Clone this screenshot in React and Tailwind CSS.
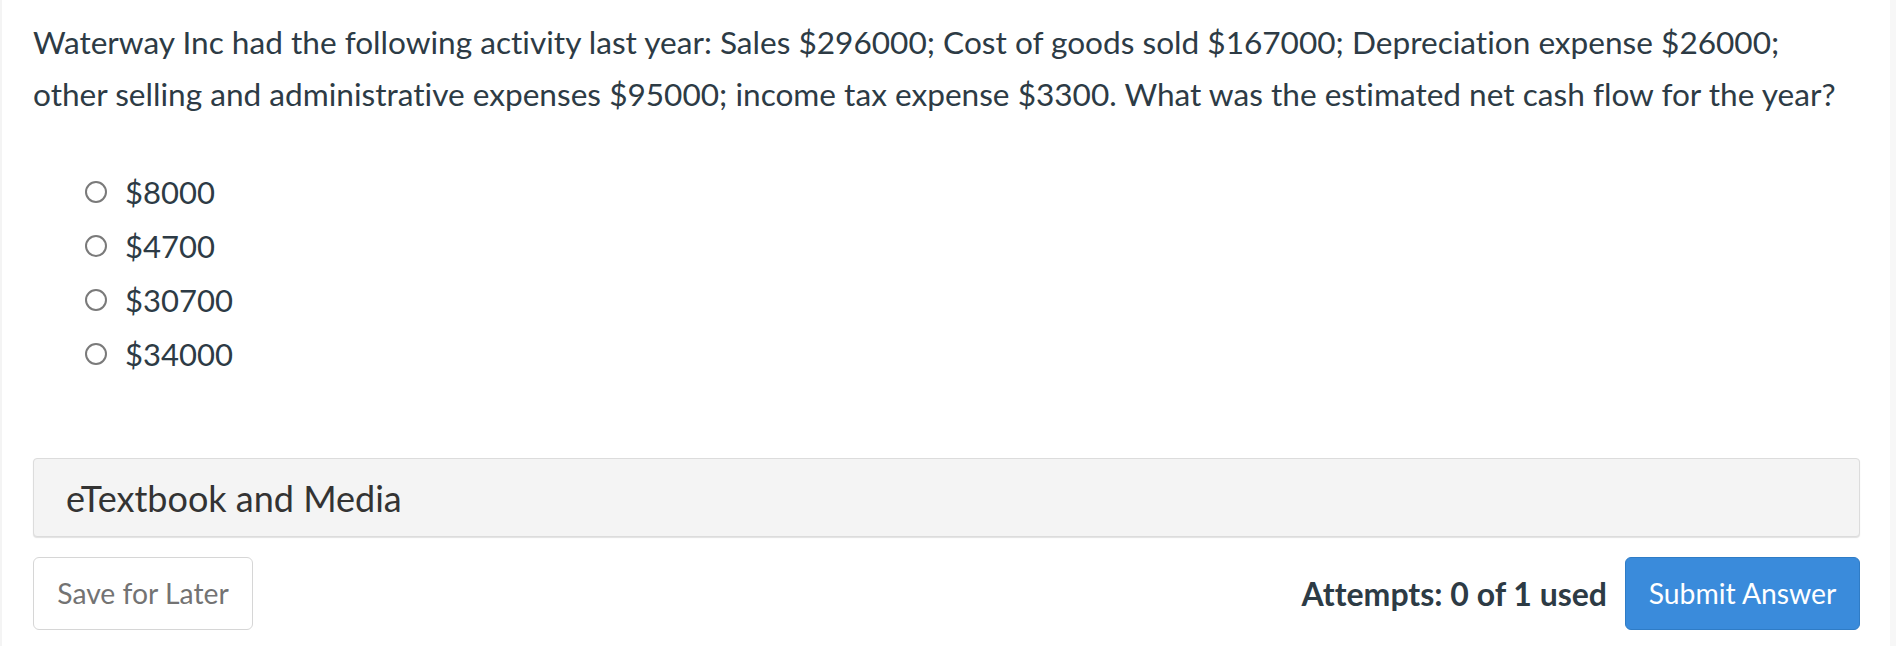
import React from "react";

const options = ["$8000", "$4700", "$30700", "$34000"];

function Radio() {
  return (
    <span className="inline-block h-[22px] w-[22px] shrink-0 rounded-full border-2 border-[#7a7a7a] bg-white" />
  );
}

export default function App() {
  return (
    <div
      className="flex h-[646px] w-[1896px] bg-white text-[#2d3b45] [font-variant-ligatures:none]"
      style={{ fontFamily: "Lato, 'Open Sans', Arial, sans-serif" }}
    >
      <div className="w-[2px] shrink-0 bg-[#f4f4f4]" />
      <main className="flex flex-1 flex-col pl-[31px] pr-[30px]">
        <p className="max-w-[1818px] shrink-0 pt-[16px] text-[31.6px] leading-[52px]">
          Waterway Inc had the following activity last year: Sales $296000; Cost of goods sold $167000; Depreciation
          expense $26000; other selling and administrative expenses $95000; income tax expense $3300. What was the
          estimated net cash flow for the year?
        </p>

        <ul className="mt-[45px] flex shrink-0 flex-col pl-[52px]">
          {options.map((o) => (
            <li key={o} className="flex h-[54px] items-center gap-[18px] text-[31px]">
              <Radio />
              <span>{o}</span>
            </li>
          ))}
        </ul>

        <div className="mt-[77px] flex h-[79px] shrink-0 items-center rounded-[4px] border border-[#dcdcdc] bg-[#f4f4f4] pl-[32px] text-[36px] text-[#333] shadow-[0_1px_1px_rgba(0,0,0,0.12)]">
          eTextbook and Media
        </div>

        <div className="mt-[20px] flex shrink-0 items-center justify-between">
          <button className="h-[73px] w-[220px] rounded-[6px] border border-[#d6d6d6] bg-white text-[28.3px] text-[#737373]">
            Save for Later
          </button>
          <div className="flex items-center gap-[18px]">
            <span className="text-[32px] font-bold text-[#2d3b45]">Attempts: 0 of 1 used</span>
            <button className="h-[73px] w-[235px] rounded-[6px] border border-[#2f7cc6] bg-[#3a8bdb] text-[28.3px] text-white">
              Submit Answer
            </button>
          </div>
        </div>
      </main>
      <div className="w-[6px] shrink-0 bg-[#f7f7f7]" />
    </div>
  );
}
